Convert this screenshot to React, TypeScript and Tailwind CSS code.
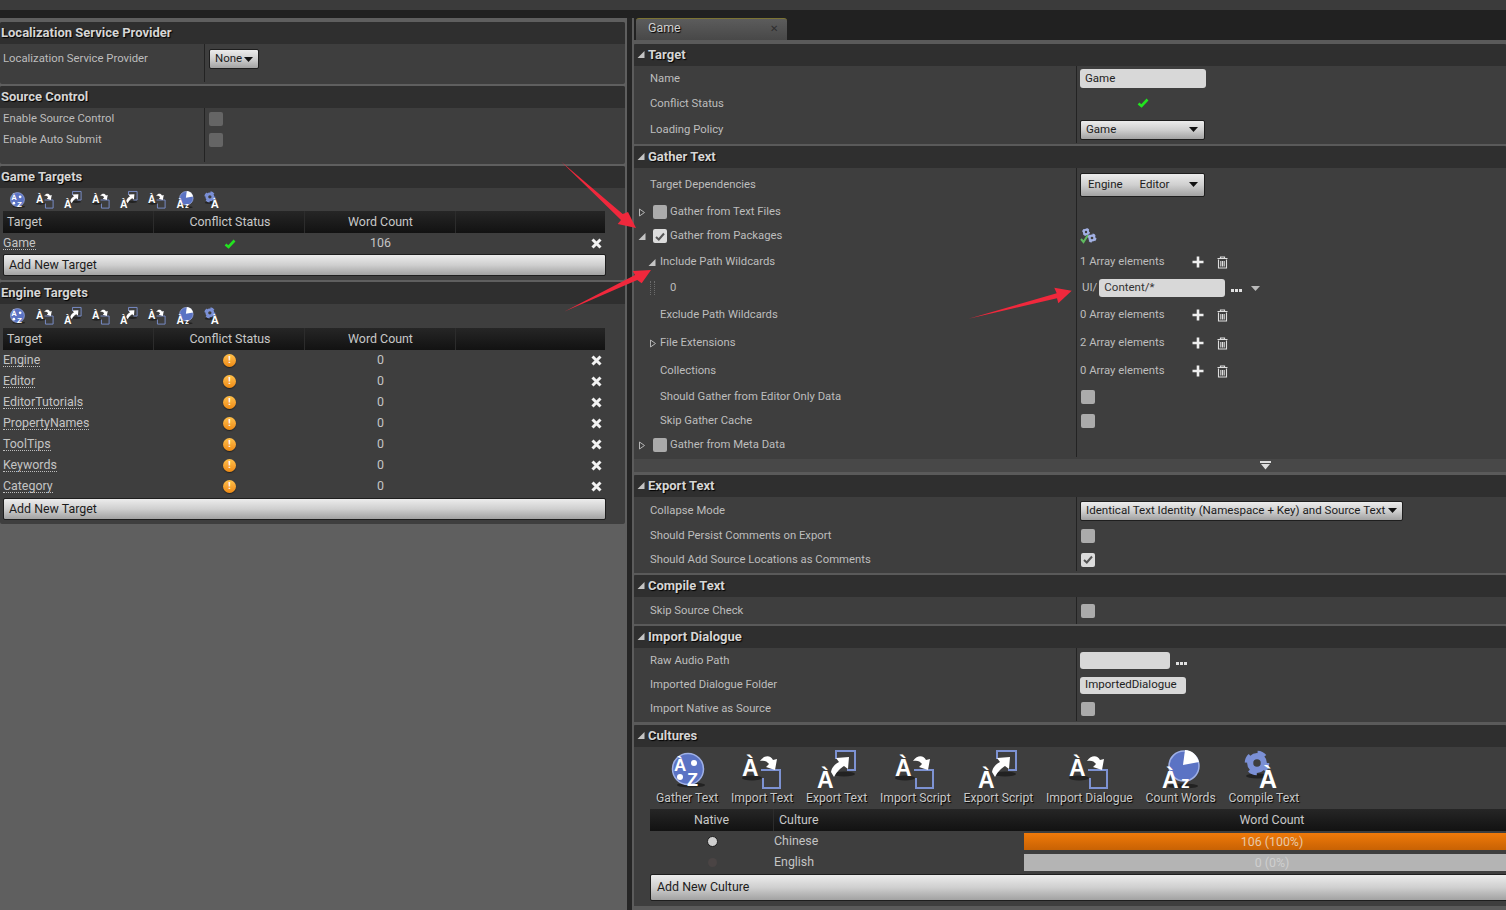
import type { ReactNode } from 'react'

const labelText = 'text-[11.3px] text-[#bdbdbd] whitespace-nowrap'
const cellText = 'text-[12.4px] text-[#c4c4c4] whitespace-nowrap'
const buttonFace = 'bg-gradient-to-b from-[#ececec] via-[#cfcfcf] to-[#a2a2a2] text-[#1c1c1c] border border-[#1e1e1e] rounded-[2px]'

type IconKind = 'gather' | 'import' | 'export' | 'count' | 'compile'

function Letter({ x, y, size, children }: { x: number; y: number; size: number; children: string }) {
  return (
    <text x={x} y={y} fontSize={size} fontWeight={700} fontFamily="Liberation Sans, sans-serif" fill="#fff">
      {children}
    </text>
  )
}

function Gear({ cx, cy, r, color = '#7b90d6' }: { cx: number; cy: number; r: number; color?: string }) {
  return (
    <g fill="none" stroke={color}>
      <circle cx={cx} cy={cy} r={r * 0.62} strokeWidth={r * 0.56} />
      <circle cx={cx} cy={cy} r={r * 0.95} strokeWidth={r * 0.34} strokeDasharray={`${r * 0.75} ${r * 0.75}`} />
    </g>
  )
}

function ToolIcon({ kind, size }: { kind: IconKind; size: number }) {
  return (
    <svg width={size} height={size} viewBox="0 0 40 40" className="overflow-visible">
      {kind === 'gather' && (
        <g>
          <ellipse cx="24" cy="35" rx="14" ry="2.5" fill="#222" />
          <circle cx="21" cy="19" r="15.5" fill="#5b73c4" stroke="#9fb0e6" strokeWidth="1.5" />
          <Letter x={7} y={21} size={17}>À</Letter>
          <Letter x={20} y={36} size={18}>Z</Letter>
          <circle cx="27" cy="13" r="3" fill="#fff" />
          <circle cx="13" cy="27" r="3" fill="#fff" />
        </g>
      )}
      {kind === 'import' && (
        <g>
          <ellipse cx="10" cy="28" rx="10" ry="2.5" fill="#222" />
          <path d="M19 20H38V38H21V28" fill="none" stroke="#7d92d2" strokeWidth="2" />
          <Letter x={0} y={26} size={23}>À</Letter>
          <path d="M18 11C23 4 29 6 31 10L35 9L33 20L24 17L27 14C25 11 22 10 18 11Z" fill="#fff" />
        </g>
      )}
      {kind === 'export' && (
        <g>
          <ellipse cx="27" cy="24" rx="11" ry="2.5" fill="#222" />
          <path d="M19 9V1H38V20H30" fill="none" stroke="#7d92d2" strokeWidth="2" />
          <Letter x={0} y={38} size={23}>À</Letter>
          <path d="M14 22C15 17 18 14 22 12L19 8L32 7L31 19L27 16C24 18 20 21 17 27Z" fill="#fff" />
        </g>
      )}
      {kind === 'count' && (
        <g>
          <ellipse cx="22" cy="36" rx="15" ry="2.5" fill="#222" />
          <circle cx="23" cy="16" r="15" fill="#5b73c4" stroke="#9fb0e6" strokeWidth="1.5" />
          <path d="M22 15L24 0C31 0 36 5 38 12Z" fill="#fff" />
          <Letter x={1} y={38} size={23}>À</Letter>
          <Letter x={20} y={38} size={17}>z</Letter>
        </g>
      )}
      {kind === 'compile' && (
        <g>
          <ellipse cx="14" cy="26" rx="12" ry="2.5" fill="#222" />
          <Gear cx={13} cy={13} r={11} />
          <Letter x={15} y={38} size={25}>À</Letter>
        </g>
      )}
    </svg>
  )
}

const smallIcons: IconKind[] = ['gather', 'import', 'export', 'import', 'export', 'import', 'count', 'compile']

const bigIcons: { kind: IconKind; label: string }[] = [
  { kind: 'gather', label: 'Gather Text' },
  { kind: 'import', label: 'Import Text' },
  { kind: 'export', label: 'Export Text' },
  { kind: 'import', label: 'Import Script' },
  { kind: 'export', label: 'Export Script' },
  { kind: 'import', label: 'Import Dialogue' },
  { kind: 'count', label: 'Count Words' },
  { kind: 'compile', label: 'Compile Text' },
]

function SectionHeader({ title, arrow }: { title: string; arrow?: boolean }) {
  return (
    <div className={`h-[22px] shrink-0 bg-[#2f2f2f] flex items-center rounded-t-[2px] ${arrow ? 'pb-[1px]' : ''}`}>
      {arrow && <Triangle open className="ml-[3px] mr-[3px]" />}
      <span className={`text-[13px] font-bold text-[#d6d6d6] whitespace-nowrap [text-shadow:1px_1px_1px_#000] ${arrow ? '' : 'ml-[1px]'}`}>
        {title}
      </span>
    </div>
  )
}

function Triangle({ open, className = '' }: { open?: boolean; className?: string }) {
  return (
    <svg width="8" height="9" viewBox="0 0 8 9" className={`shrink-0 ${className}`}>
      {open ? (
        <path d="M0.5 8H7.5V1Z" fill="#c4c4c4" />
      ) : (
        <path d="M1.5 1L6.5 4.5L1.5 8Z" fill="none" stroke="#b5b5b5" strokeWidth="1" />
      )}
    </svg>
  )
}

function Caret({ color = '#111' }: { color?: string }) {
  return (
    <svg width="9" height="5" viewBox="0 0 9 5" className="shrink-0">
      <path d="M0 0H9L4.5 5Z" fill={color} />
    </svg>
  )
}

function GreenCheck() {
  return (
    <svg width="12" height="10" viewBox="0 0 12 10">
      <path d="M1.5 5.5L4.5 8L10.5 1.5" fill="none" stroke="#22e31f" strokeWidth="2.6" />
    </svg>
  )
}

function Warn() {
  return (
    <span className="w-[13px] h-[13px] mb-[1px] rounded-full bg-gradient-to-b from-[#ffc04a] to-[#ee8a10] text-white text-[9px] leading-[13px] font-bold text-center shadow-[0_1px_1px_#222]">
      !
    </span>
  )
}

function Cross() {
  return (
    <svg width="11" height="11" viewBox="0 0 11 11">
      <path d="M1.5 1.5L9.5 9.5M9.5 1.5L1.5 9.5" stroke="#f2f2f2" strokeWidth="3" />
    </svg>
  )
}

function Checkbox({ checked, dim }: { checked?: boolean; dim?: boolean }) {
  return (
    <span className={`w-[14px] h-[14px] rounded-[2px] flex items-center justify-center shrink-0 ${dim ? 'bg-[#656565]' : checked ? 'bg-[#dcdcdc]' : 'bg-[#ababab]'}`}>
      {checked && (
        <svg width="10" height="9" viewBox="0 0 10 9">
          <path d="M1 5L3.8 7.5L9 1.5" fill="none" stroke="#555" strokeWidth="2" />
        </svg>
      )}
    </span>
  )
}

function CheckLabel({ open, checked, children }: { open?: boolean; checked?: boolean; children: string }) {
  return (
    <>
      <Triangle open={open} className="mr-[7px]" />
      <Checkbox checked={checked} />
      <span className={`${labelText} ml-[3px] mt-[1px]`}>{children}</span>
    </>
  )
}

function ArrayControls({ count }: { count: number }) {
  return (
    <div className="flex items-center">
      <span className={`${labelText} w-[112px] mt-[1px]`}>{count} Array elements</span>
      <svg width="12" height="12" viewBox="0 0 12 12">
        <path d="M6 0.5V11.5M0.5 6H11.5" stroke="#eee" strokeWidth="2.6" />
      </svg>
      <svg width="11" height="13" viewBox="0 0 11 13" className="ml-[13px]">
        <path d="M0.5 2.5H10.5M3.5 2.5V1H7.5V2.5" fill="none" stroke="#ddd" strokeWidth="1.2" />
        <path d="M1.5 3.5V12H9.5V3.5M3.8 5V10.5M5.5 5V10.5M7.2 5V10.5" fill="none" stroke="#ddd" strokeWidth="1.1" />
      </svg>
    </div>
  )
}

function Dots() {
  return (
    <svg width="11" height="4" viewBox="0 0 11 4">
      <path d="M0 1H3V4H0ZM4 1H7V4H4ZM8 1H11V4H8Z" fill="#e0e0e0" />
    </svg>
  )
}

function Prop({ height, indent = 'pl-[16px]', left, children }: { height: string; indent?: string; left: ReactNode; children?: ReactNode }) {
  return (
    <div className={`flex shrink-0 ${height}`}>
      <div className={`w-[442px] shrink-0 flex items-center ${indent}`}>{left}</div>
      <div className="flex-1 border-l border-[#232323] pl-[3px] flex items-center">{children}</div>
    </div>
  )
}

function Label({ children }: { children: string }) {
  return <span className={`${labelText} mt-[1px]`}>{children}</span>
}

function TableHead({ children, className = '' }: { children: ReactNode; className?: string }) {
  return (
    <div className={`h-[22px] shrink-0 bg-gradient-to-b from-[#262626] to-[#121212] text-[12.4px] text-[#c8c8c8] flex items-center ${className}`}>
      {children}
    </div>
  )
}

function TargetTable({ rows, toolbar, gap }: { rows: { name: string; words: number; ok?: boolean }[]; toolbar: string; gap: string }) {
  return (
    <>
      <div className={`${toolbar} flex items-center pl-[8px] gap-[10px]`}>
        {smallIcons.map((kind, i) => (
          <ToolIcon key={i} kind={kind} size={18} />
        ))}
      </div>
      <TableHead className="mx-[3px] mr-[20px]">
        <span className="w-[151px] pl-[4px] border-r border-[#2c2c2c] h-full flex items-center">Target</span>
        <span className="w-[151px] pl-[2px] border-r border-[#2c2c2c] h-full flex items-center justify-center">Conflict Status</span>
        <span className="w-[151px] pl-[1px] border-r border-[#2c2c2c] h-full flex items-center justify-center">Word Count</span>
      </TableHead>
      {rows.map((r) => (
        <div key={r.name} className={`h-[21px] flex items-center ${cellText}`}>
          <span className="w-[154px] pl-[3px]">
            <span className="border-b border-dotted border-[#bdbdbd] leading-[13px] inline-block">{r.name}</span>
          </span>
          <span className="w-[151px] flex justify-center">{r.ok ? <GreenCheck /> : <Warn />}</span>
          <span className="w-[151px] text-center">{r.words}</span>
          <span className="w-[146px] flex justify-end">
            <Cross />
          </span>
        </div>
      ))}
      <div className={`${buttonFace} ${gap} h-[22px] ml-[3px] w-[603px] flex items-center pl-[5px] text-[12.4px]`}>Add New Target</div>
    </>
  )
}

function LeftColumn() {
  const engine = ['Engine', 'Editor', 'EditorTutorials', 'PropertyNames', 'ToolTips', 'Keywords', 'Category']
  return (
    <div className="w-[627px] shrink-0 h-full bg-[#5f5f5f] flex flex-col pt-[4px] gap-[2px] pr-[2px]">
      <section className="bg-[#3e3e3e] rounded-[2px] h-[62px] flex flex-col">
        <SectionHeader title="Localization Service Provider" />
        <div className="flex h-[38px]">
          <div className="w-[205px] pl-[3px] pt-[1px] border-r border-[#232323]">
            <span className={labelText}>Localization Service Provider</span>
          </div>
          <div className="pl-[4px] pt-[5px]">
            <div className={`${buttonFace} h-[20px] w-[50px] flex items-center pl-[5px] gap-[2px] text-[11.5px]`}>
              None
              <Caret />
            </div>
          </div>
        </div>
      </section>
      <section className="bg-[#3e3e3e] rounded-[2px] h-[78px] flex flex-col">
        <SectionHeader title="Source Control" />
        <div className="flex h-[54px]">
          <div className="w-[205px] pl-[3px] border-r border-[#232323]">
            <div className="h-[21px] flex items-center"><Label>Enable Source Control</Label></div>
            <div className="h-[21px] flex items-center"><Label>Enable Auto Submit</Label></div>
          </div>
          <div className="pl-[4px]">
            <div className="h-[21px] flex items-center"><Checkbox dim /></div>
            <div className="h-[21px] flex items-center"><Checkbox dim /></div>
          </div>
        </div>
      </section>
      <section className="bg-[#3e3e3e] rounded-[2px] h-[114px] flex flex-col">
        <SectionHeader title="Game Targets" />
        <TargetTable rows={[{ name: 'Game', words: 106, ok: true }]} toolbar="h-[23px]" gap="mt-0" />
      </section>
      <section className="bg-[#3e3e3e] rounded-[2px] h-[242px] flex flex-col">
        <SectionHeader title="Engine Targets" />
        <TargetTable rows={engine.map((name) => ({ name, words: 0 }))} toolbar="h-[24px]" gap="mt-[1px]" />
      </section>
    </div>
  )
}

function RightColumn() {
  return (
    <div className="flex-1 h-full min-w-0 border-l-2 border-[#5c5c5c] flex flex-col overflow-hidden">
      <div className="h-[22px] shrink-0 bg-[#212121] pl-[2px] flex">
        <div className="w-[151px] rounded-t-[3px] bg-gradient-to-b from-[#5c5c5c] to-[#484848] border-t border-[#7c7434] flex items-center pl-[12px] pr-[9px] pb-[2px] justify-between">
          <span className="text-[12.4px] text-[#cfcfcf] [text-shadow:1px_1px_1px_#000]">Game</span>
          <span className="text-[10px] text-[#2e2e2e]">✕</span>
        </div>
      </div>
      <div className="flex-1 bg-[#5a5a5a] pt-[4px] flex flex-col gap-[2px]">
        <section className="bg-[#3e3e3e] h-[100px] flex flex-col">
          <SectionHeader title="Target" arrow />
          <Prop height="h-[25px]" left={<Label>Name</Label>}>
            <div className="w-[126px] h-[19px] bg-[#d8d8d8] rounded-[3px] text-[11.5px] text-[#222] pl-[5px] flex items-center">Game</div>
          </Prop>
          <Prop height="h-[25px]" left={<Label>Conflict Status</Label>}>
            <div className="w-[126px] flex justify-center pb-[2px]"><GreenCheck /></div>
          </Prop>
          <Prop height="h-[27px]" left={<Label>Loading Policy</Label>}>
            <div className={`${buttonFace} w-[125px] h-[20px] pl-[5px] pr-[6px] flex items-center justify-between text-[11.5px]`}>
              Game
              <Caret />
            </div>
          </Prop>
        </section>

        <section className="bg-[#3e3e3e] h-[326px] flex flex-col">
          <SectionHeader title="Gather Text" arrow />
          <Prop height="h-[33px]" left={<Label>Target Dependencies</Label>}>
            <div className={`${buttonFace} w-[125px] h-[24px] pl-[7px] pr-[6px] flex items-center justify-between text-[11.5px]`}>
              <span className="flex gap-[17px]"><span>Engine</span><span>Editor</span></span>
              <Caret />
            </div>
          </Prop>
          <Prop height="h-[22px]" indent="pl-[4px]" left={<CheckLabel>Gather from Text Files</CheckLabel>} />
          <Prop height="h-[26px]" indent="pl-[4px]" left={<CheckLabel open checked>Gather from Packages</CheckLabel>}>
            <svg width="17" height="16" viewBox="0 0 17 16">
              <path d="M1 11L3.5 14L8 7" fill="none" stroke="#5fb95f" strokeWidth="2" />
              <Gear cx={6} cy={4} r={3.5} color="#a3b1e4" />
              <Gear cx={12} cy={10} r={4} color="#a3b1e4" />
            </svg>
          </Prop>
          <Prop height="h-[26px]" indent="pl-[14px] gap-[4px]" left={<><Triangle open /><Label>Include Path Wildcards</Label></>}>
            <ArrayControls count={1} />
          </Prop>
          <Prop height="h-[26px]" indent="pl-[16px]" left={<><span className="w-[5px] h-[14px] border-x border-dotted border-[#6c6c6c] mr-[15px]" /><Label>0</Label></>}>
            <span className="text-[11.5px] text-[#bdbdbd] ml-[2px] mr-[2px]">UI/</span>
            <div className="w-[126px] h-[18px] bg-[#d8d8d8] rounded-[3px] text-[11.5px] text-[#333] pl-[5px] flex items-center">Content/*</div>
            <span className="ml-[6px] mr-[9px] mt-[4px] flex"><Dots /></span>
            <Caret color="#bbb" />
          </Prop>
          <Prop height="h-[28px]" indent="pl-[26px]" left={<Label>Exclude Path Wildcards</Label>}>
            <ArrayControls count={0} />
          </Prop>
          <Prop height="h-[28px]" indent="pl-[15px] gap-[3px]" left={<><Triangle /><Label>File Extensions</Label></>}>
            <ArrayControls count={2} />
          </Prop>
          <Prop height="h-[28px]" indent="pl-[26px]" left={<Label>Collections</Label>}>
            <ArrayControls count={0} />
          </Prop>
          <Prop height="h-[24px]" indent="pl-[26px]" left={<Label>Should Gather from Editor Only Data</Label>}>
            <span className="ml-[1px]"><Checkbox /></span>
          </Prop>
          <Prop height="h-[24px]" indent="pl-[26px]" left={<Label>Skip Gather Cache</Label>}>
            <span className="ml-[1px]"><Checkbox /></span>
          </Prop>
          <Prop height="h-[24px]" indent="pl-[4px]" left={<CheckLabel>Gather from Meta Data</CheckLabel>} />
          <div className="h-[2px] shrink-0" />
          <div className="h-[13px] shrink-0 bg-[#484848] flex items-center pl-[626px]">
            <svg width="11" height="9" viewBox="0 0 11 9">
              <path d="M0 0H11V2H0ZM1 3H10L5.5 8.5Z" fill="#ddd" />
            </svg>
          </div>
        </section>

        <section className="bg-[#3e3e3e] h-[98px] flex flex-col mt-[1px]">
          <SectionHeader title="Export Text" arrow />
          <Prop height="h-[27px]" left={<Label>Collapse Mode</Label>}>
            <div className={`${buttonFace} w-[323px] h-[20px] pl-[5px] pr-[5px] flex items-center justify-between text-[11.6px]`}>
              Identical Text Identity (Namespace + Key) and Source Text
              <Caret />
            </div>
          </Prop>
          <Prop height="h-[24px]" left={<Label>Should Persist Comments on Export</Label>}>
            <span className="ml-[1px]"><Checkbox /></span>
          </Prop>
          <Prop height="h-[23px]" left={<Label>Should Add Source Locations as Comments</Label>}>
            <span className="ml-[1px]"><Checkbox checked /></span>
          </Prop>
        </section>

        <section className="bg-[#3e3e3e] h-[49px] flex flex-col">
          <SectionHeader title="Compile Text" arrow />
          <Prop height="h-[27px]" left={<Label>Skip Source Check</Label>}>
            <span className="ml-[1px]"><Checkbox /></span>
          </Prop>
        </section>

        <section className="bg-[#3e3e3e] h-[96px] flex flex-col">
          <SectionHeader title="Import Dialogue" arrow />
          <Prop height="h-[25px]" left={<Label>Raw Audio Path</Label>}>
            <div className="w-[90px] h-[17px] bg-[#d8d8d8] rounded-[3px]" />
            <span className="ml-[6px] mt-[4px] flex"><Dots /></span>
          </Prop>
          <Prop height="h-[24px]" left={<Label>Imported Dialogue Folder</Label>}>
            <div className="w-[106px] h-[17px] bg-[#d8d8d8] rounded-[3px] text-[11.5px] text-[#222] pl-[5px] flex items-center">ImportedDialogue</div>
          </Prop>
          <Prop height="h-[24px]" left={<Label>Import Native as Source</Label>}>
            <span className="ml-[1px]"><Checkbox /></span>
          </Prop>
        </section>

        <section className="bg-[#3e3e3e] h-[181px] flex flex-col mt-[1px]">
          <SectionHeader title="Cultures" arrow />
          <div className="h-[62px] shrink-0 flex pl-[22px] gap-[12.8px] pt-[3px]">
            {bigIcons.map((b) => (
              <div key={b.label} className="flex flex-col items-center">
                <ToolIcon kind={b.kind} size={40} />
                <span className="text-[12.2px] text-[#c8c8c8] whitespace-nowrap mt-[-1px] [text-shadow:1px_1px_1px_#000]">{b.label}</span>
              </div>
            ))}
          </div>
          <div className="pl-[16px] flex flex-col w-[886px]">
            <TableHead>
              <span className="w-[124px] h-full flex items-center justify-center border-r border-[#2c2c2c]">Native</span>
              <span className="w-[250px] h-full flex items-center pl-[5px]">Culture</span>
              <span className="flex-1 text-center">Word Count</span>
            </TableHead>
            <div className={`h-[21px] flex items-center ${cellText}`}>
              <span className="w-[124px] flex justify-center">
                <span className="w-[11px] h-[11px] rounded-full bg-[#cfcfcf] border border-[#1e1e1e]" />
              </span>
              <span className="w-[250px]">Chinese</span>
              <div className="flex-1 h-[17px] bg-gradient-to-b from-[#f07a0a] to-[#c86204] text-center leading-[17px] text-[#e8c8a8]">106 (100%)</div>
            </div>
            <div className={`h-[21px] flex items-center ${cellText}`}>
              <span className="w-[124px] flex justify-center">
                <span className="w-[9px] h-[9px] rounded-full bg-[#4a4444]" />
              </span>
              <span className="w-[250px]">English</span>
              <div className="flex-1 h-[17px] bg-[#b4b4b4] text-center leading-[17px] text-[#cfcfcf]">0 (0%)</div>
            </div>
            <div className={`${buttonFace} h-[27px] mt-[1px] flex items-center pl-[6px] text-[12.4px]`}>Add New Culture</div>
          </div>
        </section>
      </div>
    </div>
  )
}

export default function App() {
  return (
    <div className="relative w-[1506px] h-[910px] overflow-hidden bg-[#252525] flex flex-col [font-family:Roboto,sans-serif]">
      <div className="h-[10px] shrink-0 bg-[#3b3b3b]" />
      <div className="h-[8px] shrink-0 bg-[#212121]" />
      <div className="flex-1 min-h-0 flex">
        <LeftColumn />
        <div className="w-[5px] shrink-0" />
        <RightColumn />
      </div>
      <svg className="absolute left-0 top-0 pointer-events-none" width="1506" height="910" viewBox="0 0 1506 910">
        <g fill="#f0283c">
          <path d="M561 161.5L622.7 214L628 212L636 228L617.7 224L621 220Z" />
          <path d="M564.5 311.5L635 275L632.7 271L651 270L641.7 283.3L637.3 280Z" />
          <path d="M968.5 318.8L1056.7 293.3L1054.3 287.7L1071.7 290.7L1058.3 303.3L1057 298.3Z" />
        </g>
      </svg>
    </div>
  )
}
